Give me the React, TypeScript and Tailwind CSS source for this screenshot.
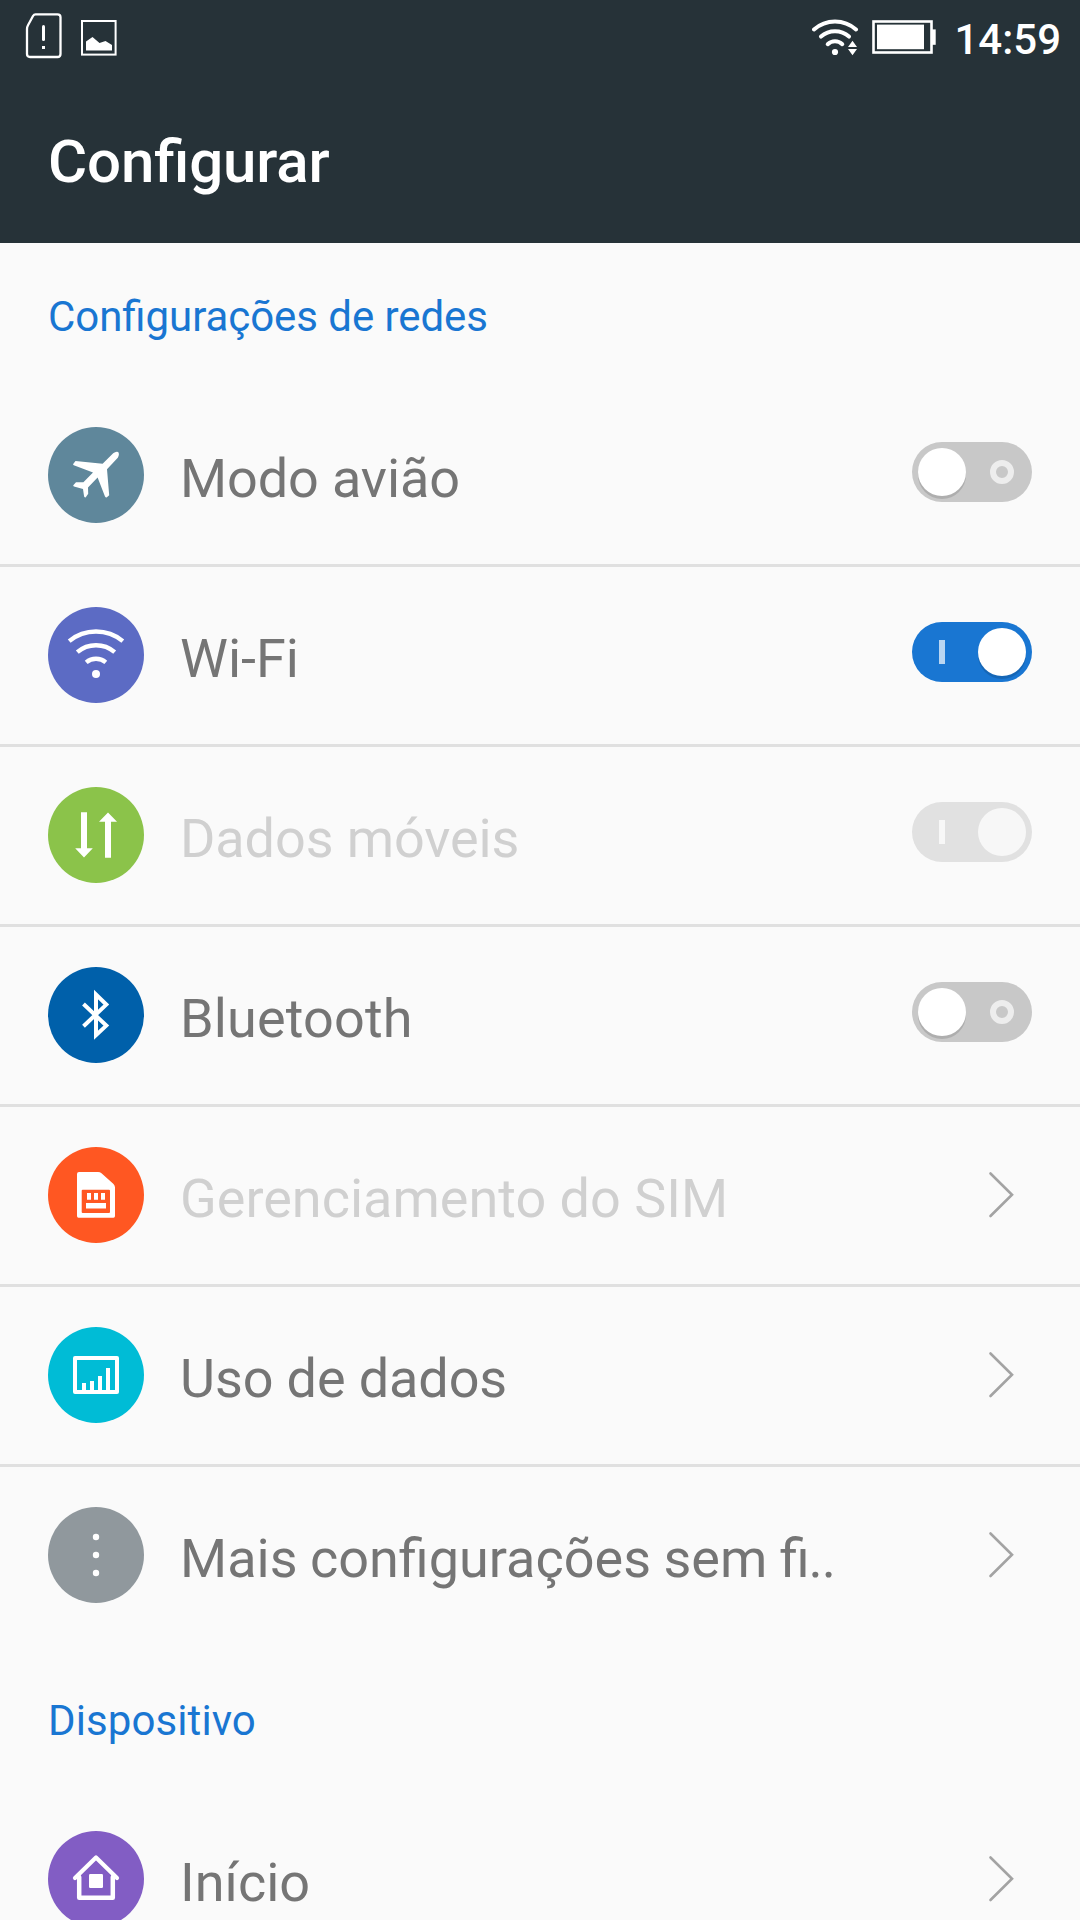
import { useState } from 'react'
import type { ReactNode } from 'react'

type Item = {
  id: string
  label: string
  color: string
  icon: ReactNode
  tracking?: string
  disabled?: boolean
  control: 'switch' | 'arrow'
}

const icons = {
  airplane: (
    <path
      fill="#fff"
      d="M27.5 34.1L54.6 36.7L65.2 26.2Q68 24 70.2 25Q71.8 27.2 69.8 30.8L59 42.2L61.2 68.2L58.6 70.6Q57.4 70.6 57 69.6L49.6 50.6L40 60.6L40.2 66.8L37.6 70.4Q36.5 70.4 36.1 69.4L35 62L26 59.6Q25 59 25.3 58.2L28 55.3L35.4 55.2L45 45.6L25.8 38.2Q24.8 37.8 25.2 37Z"
    />
  ),
  wifi: (
    <g fill="none" stroke="#fff" strokeWidth="4.4">
      <path d="M21.2 34.1A42.3 42.3 0 0 1 74.8 34.1" />
      <path d="M29.3 45.2A28.6 28.6 0 0 1 66.7 45.2" />
      <path d="M38.2 55.4A15.2 15.2 0 0 1 57.8 55.4" />
      <circle cx="48" cy="67" r="4" fill="#fff" stroke="none" />
    </g>
  ),
  data: (
    <path fill="#fff" d="M33 25.3H39V61.3H44.8L36 70.5L27.2 61.3H33ZM57 70.7V34.7H51L60 25.5L69 34.7H63V70.7Z" />
  ),
  bluetooth: (
    <path
      fill="none"
      stroke="#fff"
      strokeWidth="4"
      strokeMiterlimit="10"
      d="M35.5 37L58.3 58.6L48 68.2V27.6L58.3 37.6L35.5 59.2"
    />
  ),
  sim: (
    <g fill="#fff">
      <path
        fillRule="evenodd"
        d="M31 25H50Q52 25 53.5 26.3L65.5 37Q67 38.5 67 40.5V69Q67 70.7 65.5 70.7H30.5Q29 70.7 29 69V27Q29 25 31 25ZM34.7 42.7Q33.7 42.7 33.7 43.7V65Q33.7 66 34.7 66H61Q62 66 62 65V43.7Q62 42.7 61 42.7Z"
      />
      <path d="M39 46h4v6.7h-4zM46 46h4v6.7h-4zM53 46h4v6.7h-4zM38 56h20v5.4h-20z" />
    </g>
  ),
  usage: (
    <g fill="#fff">
      <rect x="27" y="31" width="42" height="34" fill="none" stroke="#fff" strokeWidth="4" strokeLinejoin="round" />
      <path d="M34 56h4v9h-4zM42 54h4v11h-4zM50 49h4v16h-4zM58 41h4v24h-4z" />
    </g>
  ),
  more: (
    <g fill="#fff">
      <circle cx="48" cy="30" r="3.2" />
      <circle cx="48" cy="48" r="3.2" />
      <circle cx="48" cy="66" r="3.2" />
    </g>
  ),
  home: (
    <g fill="none" stroke="#fff" strokeWidth="4.2" strokeLinecap="round" strokeLinejoin="round">
      <path d="M27 47L48 26.4L69 47" />
      <path strokeWidth="4.5" d="M31.2 46V66.8H64.8V46" />
      <rect x="41" y="43" width="14" height="14" rx="1.2" fill="#fff" stroke="none" />
    </g>
  ),
}

const sections: { title: string; tracking: string; items: Item[] }[] = [
  {
    title: 'Configurações de redes',
    tracking: 'tracking-[-0.06px]',
    items: [
      { id: 'airplane', label: 'Modo avião', color: 'bg-[#5f879b]', icon: icons.airplane, tracking: 'tracking-[-0.12px]', control: 'switch' },
      { id: 'wifi', label: 'Wi-Fi', color: 'bg-[#5c6bc4]', icon: icons.wifi, control: 'switch' },
      { id: 'data', label: 'Dados móveis', color: 'bg-[#8bc34a]', icon: icons.data, tracking: 'tracking-[-0.1px]', control: 'switch', disabled: true },
      { id: 'bluetooth', label: 'Bluetooth', color: 'bg-[#0060aa]', icon: icons.bluetooth, tracking: 'tracking-[0.14px]', control: 'switch' },
      { id: 'sim', label: 'Gerenciamento do SIM', color: 'bg-[#ff5722]', icon: icons.sim, control: 'arrow', disabled: true },
      { id: 'usage', label: 'Uso de dados', color: 'bg-[#00bcd6]', icon: icons.usage, tracking: 'tracking-[-0.12px]', control: 'arrow' },
      { id: 'more', label: 'Mais configurações sem fi..', color: 'bg-[#90989d]', icon: icons.more, control: 'arrow' },
    ],
  },
  {
    title: 'Dispositivo',
    tracking: 'tracking-[0.1px]',
    items: [{ id: 'home', label: 'Início', color: 'bg-[#825dc4]', icon: icons.home, control: 'arrow' }],
  },
]

function Label({ text }: { text: string }) {
  if (!text.endsWith('..')) return <>{text}</>
  return (
    <>
      <span className="[word-spacing:-1px]">{text.slice(0, -2)}</span>
      <span className="-ml-px tracking-[-1px]">..</span>
    </>
  )
}

function StatusBar() {
  return (
    <div className="flex h-[78px] items-start justify-between pl-6 pr-[19px] text-white">
      <div className="flex">
        <svg className="h-[72px] w-[38px]" viewBox="0 0 38 72" fill="none" stroke="currentColor" strokeWidth="2.3">
          <path strokeLinejoin="round" d="M11.5 14.3H33.5Q36.5 14.3 36.5 17.3V54Q36.5 57 33.5 57H6Q3 57 3 54V29Q3 27 4 25.2L9 16Q10 14.3 11.5 14.3Z" />
          <path strokeWidth="3" strokeLinecap="round" d="M19.5 26.5V39.5" />
          <path strokeWidth="3" d="M18 47.5H21" />
        </svg>
        <svg className="ml-[19px] h-[72px] w-9" viewBox="0 0 36 72">
          <rect x="1" y="21" width="33.6" height="33.6" fill="none" stroke="currentColor" strokeWidth="2" />
          <path fill="currentColor" d="M5 50.5V41.5L11.5 37L18.5 43L24.5 41L31 45V50.5Z" />
        </svg>
      </div>
      <div className="flex">
        <svg className="h-[72px] w-12" viewBox="812 0 48 72" fill="none" stroke="currentColor" strokeWidth="4" strokeLinecap="round">
          <path d="M814 29.5A31.5 31.5 0 0 1 856 29.5" />
          <path d="M821 36.6A21 21 0 0 1 849 36.6" />
          <path d="M827.7 44.2A10.5 10.5 0 0 1 842.3 44.2" />
          <circle cx="835" cy="52" r="3.1" fill="currentColor" stroke="none" />
          <path fill="currentColor" stroke="none" d="M852.5 40.7L857 47H848ZM848 49H857L852.5 55.2Z" />
        </svg>
        <svg className="ml-3 h-[72px] w-16" viewBox="872 0 64 72" fill="currentColor">
          <rect x="873.5" y="21.5" width="58" height="31" fill="none" stroke="currentColor" strokeWidth="2.6" />
          <rect x="877" y="24.6" width="47" height="24.6" />
          <rect x="932" y="29.4" width="3.7" height="15.4" />
        </svg>
        <span className="ml-[18px] mt-[15px] text-[42px] font-medium leading-[49px]">14:59</span>
      </div>
    </div>
  )
}

function Switch({ on, disabled, onClick }: { on: boolean; disabled?: boolean; onClick: () => void }) {
  const track = disabled ? 'bg-[#e1e1e1]' : on ? 'bg-[#1976d2]' : 'bg-[#c8c8c8]'
  const knob = disabled ? 'bg-[#f7f7f7]' : 'bg-white shadow-[0_3px_0_rgba(0,0,0,0.13)]'

  return (
    <button
      type="button"
      role="switch"
      aria-checked={on}
      disabled={disabled}
      onClick={onClick}
      className={`mt-[55px] flex h-[60px] w-[120px] items-center justify-between rounded-full px-1.5 ${track}`}
    >
      {on ? (
        <>
          <span className={`ml-[21px] h-6 w-1.5 ${disabled ? 'bg-[#f7f7f7]' : 'bg-[#bad6f2]'}`} />
          <span className={`size-12 rounded-full ${knob}`} />
        </>
      ) : (
        <>
          <span className={`size-12 rounded-full ${knob}`} />
          <span className="mr-3 size-6 rounded-full border-6 border-[#ededed]" />
        </>
      )}
    </button>
  )
}

export default function App() {
  const [enabled, setEnabled] = useState<Record<string, boolean>>({ wifi: true, data: true })

  return (
    <div className="h-[1920px] w-[1080px] overflow-hidden bg-[#fafafa] font-['Roboto',sans-serif]">
      <header className="h-[243px] bg-[#263238]">
        <StatusBar />
        <h1 className="pl-12 pt-[49px] text-[60px] font-medium leading-[70px] tracking-[-0.12px] text-white [font-feature-settings:'liga']">
          Configurar
        </h1>
      </header>

      {sections.map(section => (
        <section key={section.title}>
          <h2 className={`h-36 pl-12 pt-[49px] text-[42px] leading-[49px] text-[#1976d2] [font-feature-settings:'liga'] ${section.tracking}`}>
            {section.title}
          </h2>
          <ul>
            {section.items.map(item => (
              <li key={item.id} className="flex h-[180px] items-start border-b-3 border-[#e0e0e0] px-12 last:border-b-0">
                <div className={`mt-10 size-24 shrink-0 rounded-full ${item.color}`}>
                  <svg className="size-24" viewBox="0 0 96 96">{item.icon}</svg>
                </div>
                <span
                  className={`ml-9 mt-[60px] grow whitespace-nowrap text-[54px] leading-[63px] ${item.tracking ?? ''} ${item.disabled ? 'text-[#d0d0d0]' : 'text-[#757575]'}`}
                >
                  <Label text={item.label} />
                </span>
                {item.control === 'switch' ? (
                  <Switch
                    on={!!enabled[item.id]}
                    disabled={item.disabled}
                    onClick={() => setEnabled({ ...enabled, [item.id]: !enabled[item.id] })}
                  />
                ) : (
                  <svg className="mr-4 mt-16 h-12 w-8" viewBox="0 0 32 48" fill="none" stroke="#a3a3a3" strokeWidth="2.6" strokeLinecap="round">
                    <path d="M6.5 2.5L28 23.7L6.5 45" />
                  </svg>
                )}
              </li>
            ))}
          </ul>
        </section>
      ))}
    </div>
  )
}
